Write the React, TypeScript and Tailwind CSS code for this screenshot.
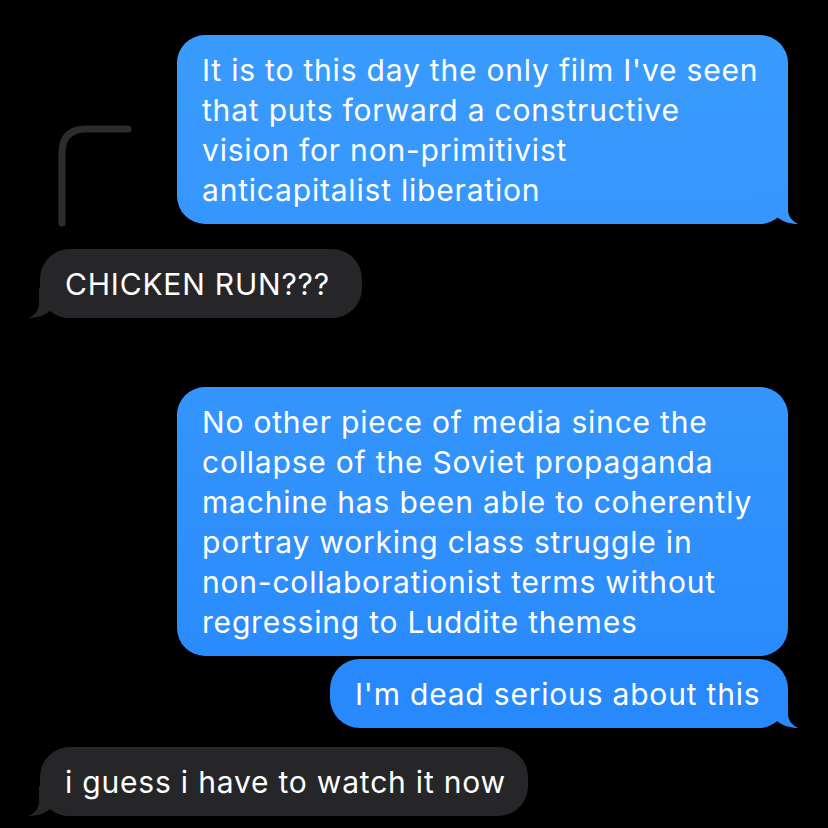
import React from "react";

function TailRight({ color }: { color: string }) {
  return (
    <svg
      className="absolute -right-[10px] bottom-0"
      width="40"
      height="30"
      viewBox="0 0 40 30"
    >
      <path
        d="M30 0 L30 16 C30 22 34 27 40 30 C33 30 25 28 19 23 C14 27 8 30 0 30 L0 0 Z"
        fill={color}
      />
    </svg>
  );
}

function TailLeft({ color }: { color: string }) {
  return (
    <svg
      className="absolute -left-[11px] bottom-0"
      width="40"
      height="30"
      viewBox="0 0 40 30"
    >
      <path
        d="M10 0 L10 16 C10 22 6 27 0 30 C7 30 15 28 21 23 C26 27 32 30 40 30 L40 0 Z"
        fill={color}
      />
    </svg>
  );
}

function ReplyLine() {
  return (
    <svg width="80" height="104" viewBox="0 0 80 104" className="-mb-[3px]">
      <path
        d="M7 100 L7 30 Q7 6 31 6 L73 6"
        fill="none"
        stroke="#2c2c2e"
        strokeWidth="7"
        strokeLinecap="round"
      />
    </svg>
  );
}

export default function App() {
  return (
    <div className="flex min-h-[828px] w-[828px] flex-col bg-black pt-[35px] font-['Inter',sans-serif] text-[30px] leading-[40px] tracking-[0.8px] text-white">
      <div className="flex items-end justify-between pl-[55px] pr-[40px]">
        <ReplyLine />
        <div className="relative w-[611px] rounded-[28px] bg-linear-to-b from-[#3a9bfd] to-[#3696fd] px-[25px] pt-[15px] pb-[14px]">
          <p className="relative z-10">
            It is to this day the only film I've seen
            <br />
            that puts forward a constructive
            <br />
            vision for non-primitivist
            <br />
            anticapitalist liberation
          </p>
          <TailRight color="#3696fd" />
        </div>
      </div>

      <div className="relative ml-[40px] mt-[25px] w-[322px] rounded-[30px] bg-[#262628] px-[25px] pt-[15px] pb-[14px]">
        <p className="relative z-10 whitespace-nowrap">CHICKEN RUN???</p>
        <TailLeft color="#262628" />
      </div>

      <div className="mr-[40px] mt-[69px] flex flex-col items-end gap-[3px]">
        <div className="w-[611px] rounded-[28px] bg-linear-to-b from-[#3595fd] to-[#2a8bfc] px-[25px] pt-[15px] pb-[14px]">
          <p className="whitespace-nowrap">
            No other piece of media since the
            <br />
            collapse of the Soviet propaganda
            <br />
            machine has been able to coherently
            <br />
            portray working class struggle in
            <br />
            non-collaborationist terms without
            <br />
            regressing to Luddite themes
          </p>
        </div>
        <div className="relative w-[458px] rounded-[30px] bg-[#2789fc] px-[25px] pt-[15px] pb-[14px]">
          <p className="relative z-10 whitespace-nowrap">I'm dead serious about this</p>
          <TailRight color="#2789fc" />
        </div>
      </div>

      <div className="relative ml-[40px] mt-[19px] w-[488px] rounded-[30px] bg-[#262628] px-[25px] pt-[15px] pb-[14px]">
        <p className="relative z-10 whitespace-nowrap">i guess i have to watch it now</p>
        <TailLeft color="#262628" />
      </div>
    </div>
  );
}
